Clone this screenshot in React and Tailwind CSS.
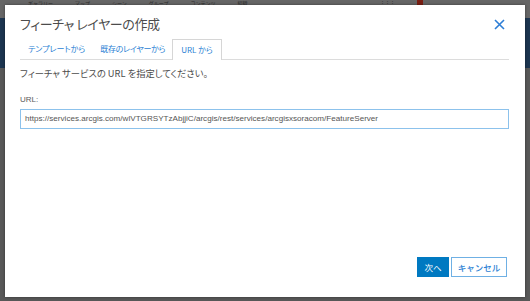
import React from "react";

const jp = { fontFamily: '"Noto Sans CJK JP", "Noto Sans", sans-serif' };

export default function App() {
  return (
    <div className="relative w-[530px] h-[301px] overflow-hidden bg-[#5a5a5a]" style={jp}>
      {/* dimmed page behind the modal */}
      <div className="flex flex-col h-full">
        <div className="h-[18px] bg-[#666666] flex items-start pl-[28px] gap-[22px] text-[5px] leading-[5px] text-[#2e2e2e]">
          <span>ギャラリー</span>
          <span>マップ</span>
          <span>シーン</span>
          <span>グループ</span>
          <span>コンテンツ</span>
          <span>組織</span>
          <span className="ml-[110px]">⋮⋮⋮</span>
          <span className="w-[6px] h-[5px] bg-[#7a1d12]"></span>
        </div>
        <div className="h-[50px] bg-[#1c3550]"></div>
        <div className="flex-1 bg-[#585858]"></div>
      </div>

      {/* modal */}
      <div className="absolute left-[5px] top-[5px] w-[520px] h-[292px] bg-white flex flex-col pl-[15px] pr-[16px] shadow-[0_0_3px_rgba(0,0,0,0.4)]">
        <div className="flex items-center justify-between pt-[9px] h-[29px]">
          <div className="text-[13px] leading-[20px] tracking-[-0.4px] text-[#4c4c4c] [font-feature-settings:'palt']">
            フィーチャ レイヤーの作成
          </div>
          <svg width="11" height="11" viewBox="0 0 11 11" className="mr-[4px]">
            <path d="M1 1 L10 10 M10 1 L1 10" stroke="#2d7ed6" strokeWidth="1.6" />
          </svg>
        </div>

        <div className="mt-[5px] h-[21px] flex items-end border-b border-[#dcdcdc] text-[8px] text-[#2b7fd4] [font-feature-settings:'palt']">
          <div className="h-[20px] px-[8px] flex items-center">テンプレートから</div>
          <div className="h-[20px] px-[7px] flex items-center tracking-[-0.3px]">既存のレイヤーから</div>
          <div className="h-[21px] px-[8px] flex items-center bg-white border border-b-0 border-[#d6d6d6] -mb-[1px] pb-[1px]">
            URL から
          </div>
        </div>

        <div className="mt-[6px] text-[9.3px] leading-[14px] text-[#4c4c4c] [font-feature-settings:'palt']">
          フィーチャ サービスの URL を指定してください。
        </div>

        <div className="mt-[14px] text-[8px] leading-[12px] text-[#5a5a5a]" style={{ fontFamily: '"Liberation Sans", sans-serif' }}>
          URL:
        </div>

        <div
          className="mt-[3px] h-[20px] border border-[#8cc2ec] flex items-center pl-[4px] text-[8.1px] text-[#555555] whitespace-nowrap overflow-hidden"
          style={{ fontFamily: '"Liberation Sans", sans-serif' }}
        >
          https://services.arcgis.com/wlVTGRSYTzAbjjiC/arcgis/rest/services/arcgisxsoracom/FeatureServer
        </div>

        <div className="flex-1"></div>

        <div className="flex justify-end gap-[2px] mb-[20px] pr-[2px]">
          <button className="w-[32px] h-[20px] bg-[#0079c1] text-white text-[8.5px] flex items-center justify-center">
            次へ
          </button>
          <button className="w-[56px] h-[20px] bg-white border border-[#6fb0e4] text-[#2b7fd4] text-[8.5px] font-medium flex items-center justify-center">
            キャンセル
          </button>
        </div>
      </div>
    </div>
  );
}
